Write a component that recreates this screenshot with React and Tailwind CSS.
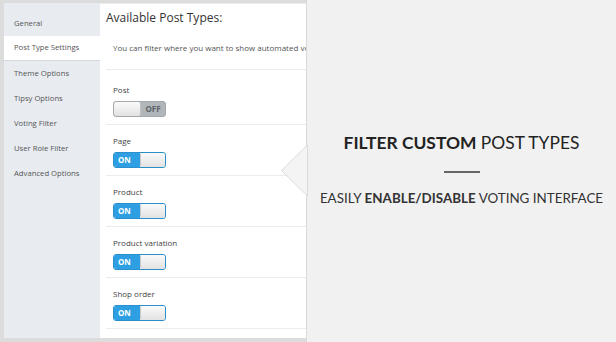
import React from "react";

function Toggle({ on }) {
  if (on) {
    return (
      <div className="flex h-[16px] w-[53px] overflow-hidden rounded-[3px] border border-[#2a8fcc]">
        <div className="flex w-[26px] items-center bg-[#2d9fe2] pl-[4px] text-[8px] font-bold leading-none text-white">
          ON
        </div>
        <div className="flex-1 rounded-[2px] border-l border-[#c9c9c9] bg-gradient-to-b from-[#fafafa] to-[#e2e2e2]" />
      </div>
    );
  }
  return (
    <div className="flex h-[16px] w-[53px] overflow-hidden rounded-[3px] border border-[#a3a9ad] bg-[#b0b6ba]">
      <div className="w-[27px] rounded-[2px] border-r border-[#c0c0c0] bg-gradient-to-b from-[#fafafa] to-[#e2e2e2]" />
      <div className="flex flex-1 items-center justify-center text-[8px] font-bold leading-none text-[#5c6266]">
        OFF
      </div>
    </div>
  );
}

const menu = [
  "General",
  "Post Type Settings",
  "Theme Options",
  "Tipsy Options",
  "Voting Filter",
  "User Role Filter",
  "Advanced Options",
];

const rows = [
  { label: "Post", on: false },
  { label: "Page", on: true },
  { label: "Product", on: true },
  { label: "Product variation", on: true },
  { label: "Shop order", on: true },
];

export default function App() {
  return (
    <div className="flex h-[342px] w-[616px] overflow-hidden bg-[#f1f1f1] font-['Open_Sans',sans-serif]">
      <div className="flex h-full w-[306px] shrink-0 bg-[#dcdcdc] pb-[4px] pl-[4px] pt-[3px]">
        <div className="w-[96px] shrink-0 bg-[#e8ecf1] pt-[8px]">
          {menu.map((m, i) => (
            <div
              key={m}
              className={
                "flex h-[25px] items-center whitespace-nowrap pl-[10px] text-[7.7px] text-[#555] " +
                (i === 1 ? "border-b border-[#d3d8de] bg-white text-[#333]" : "")
              }
            >
              {m}
            </div>
          ))}
        </div>
        <div className="min-w-0 flex-1 overflow-hidden border-t border-[#ececec] bg-white pl-[6px]">
          <div className="mt-[5px] whitespace-nowrap text-[12px] leading-[17px] text-[#333]">
            Available Post Types:
          </div>
          <div className="h-[44px] overflow-hidden whitespace-nowrap border-b border-[#ececec] pl-[7px] pt-[16px] text-[8px] leading-[12px] text-[#555]">
            You can filter where you want to show automated voting interface.
          </div>
          {rows.map((r, i) => (
            <div
              key={r.label}
              className={
                "border-b border-[#ececec] pb-[7px] pl-[7px] " +
                (i === 0 ? "pt-[15px]" : "pt-[11px]")
              }
            >
              <div className="text-[8px] leading-[10px] text-[#444]">{r.label}</div>
              <div className="mt-[6px]">
                <Toggle on={r.on} />
              </div>
            </div>
          ))}
        </div>
      </div>
      <div className="relative flex flex-1 flex-col items-center border-l border-[#d9d9d9] bg-[#f1f1f1] pt-[133px] font-['Lato',sans-serif]">
        <svg
          className="absolute left-[-26px] top-[145px]"
          width="27"
          height="51"
          viewBox="0 0 27 51"
        >
          <polygon points="26.5,0 0.5,25.5 26.5,51" fill="#f4f4f4" stroke="#dadada" strokeWidth="1" />
        </svg>
        <div className="whitespace-nowrap text-[17.4px] leading-[20px] text-[#222]">
          <span className="font-bold">FILTER CUSTOM</span> POST TYPES
        </div>
        <div className="mt-[18px] h-[2px] w-[36px] bg-[#666]" />
        <div className="mt-[17px] whitespace-nowrap text-[13.4px] leading-[16px] text-[#333]">
          EASILY <span className="font-bold">ENABLE/DISABLE</span> VOTING INTERFACE
        </div>
      </div>
    </div>
  );
}
